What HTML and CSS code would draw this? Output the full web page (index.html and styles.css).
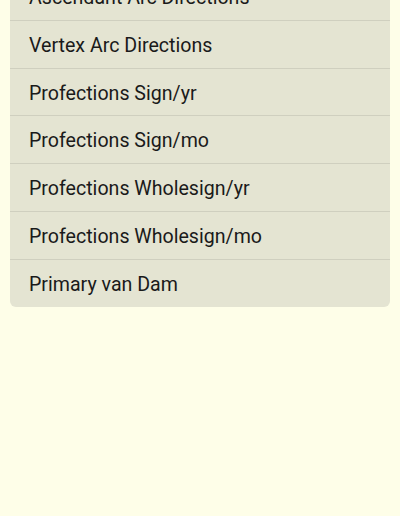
FILE: index.html
```html
<!DOCTYPE html>
<html lang="en">
<head>
    <meta charset="UTF-8">
    <title>Directions</title>
    <link rel="stylesheet" href="styles.css">
</head>
<body>
    <div class="page">
        <ul class="method-list">
            <li>Ascendant Arc Directions</li>
            <li>Vertex Arc Directions</li>
            <li>Profections Sign/yr</li>
            <li>Profections Sign/mo</li>
            <li>Profections Wholesign/yr</li>
            <li>Profections Wholesign/mo</li>
            <li>Primary van Dam</li>
        </ul>
    </div>
</body>
</html>
```

FILE: styles.css
```css
body {
    margin: 0;
    padding: 0;
    background: #fefee8;
    font-family: Roboto, "Liberation Sans", sans-serif;
    overflow: hidden;
}

.page {
    padding: 0 10px;
    height: 516px;
}

/* list scrolled up a little, first row cut off */
.method-list {
    list-style: none;
    margin: -27px 0 0 0;
    padding: 0;
    background: #e4e4d2;
    border-radius: 0 0 6px 6px;
}

.method-list li {
    height: 43.8px;
    line-height: 43.8px;
    padding: 3px 19px 0;
    font-size: 19.6px;
    color: #1a1a1a;
    border-bottom: 1px solid #cfcfbf;
}

.method-list li:last-child {
    border-bottom: none;
}
```
